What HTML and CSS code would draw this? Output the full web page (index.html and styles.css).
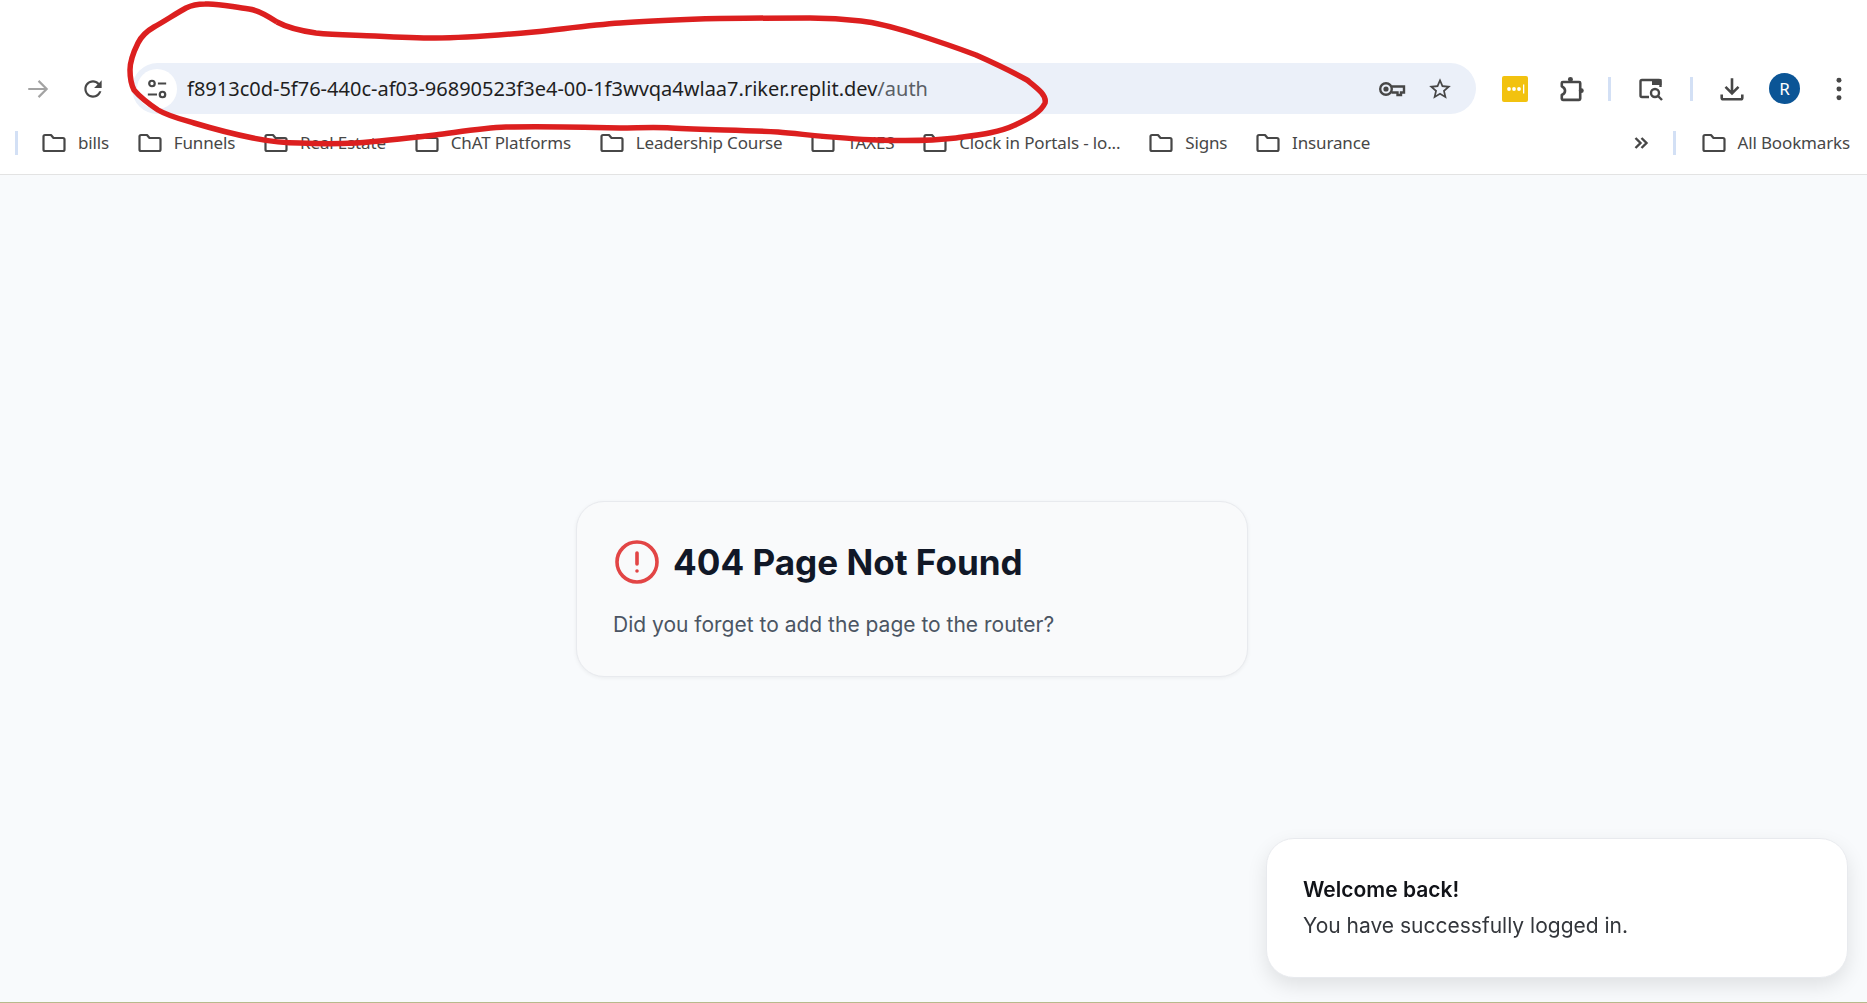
FILE: index.html
```html
<!doctype html>
<html lang="en">
<head>
  <meta charset="utf-8">
  <title>Not Found</title>
  <link rel="stylesheet" href="styles.css">
</head>
<body>
  <svg width="0" height="0" class="defs">
    <symbol id="folder" viewBox="0 0 24 20">
      <path d="M1.500 3.500a1.500 1.500 0 0 1 1.500-1.500h6l2.500 3h9.500a1.500 1.500 0 0 1 1.500 1.500v10a1.500 1.500 0 0 1-1.500 1.500h-18a1.500 1.500 0 0 1-1.500-1.500z" fill="none" stroke="currentColor" stroke-width="2.200" stroke-linejoin="round"/>
    </symbol>
  </svg>

  <header class="toolbar">
    <button class="tool back">
      <svg viewBox="0 0 24 24" class="line-icon"><path d="M3 12h17M12.500 4.500l7.500 7.500-7.500 7.500"/></svg>
    </button>
    <button class="tool reload">
      <svg viewBox="0 0 24 24" class="fill-icon"><path d="M17.650 6.350C16.200 4.900 14.210 4 12 4c-4.420 0-7.990 3.580-7.990 8s3.570 8 7.990 8c3.730 0 6.840-2.550 7.730-6h-2.080c-.82 2.330-3.040 4-5.650 4-3.310 0-6-2.690-6-6s2.690-6 6-6c1.660 0 3.140.69 4.220 1.780L13 11h7V4l-2.350 2.350z"/></svg>
    </button>
    <div class="omnibox">
      <span class="site-info">
        <svg viewBox="0 0 24 24" class="line-icon dark"><circle cx="6.500" cy="6" r="3"/><path d="M13 6h9M2 18h10"/><circle cx="18" cy="18" r="3"/></svg>
      </span>
      <span class="url">f8913c0d-5f76-440c-af03-96890523f3e4-00-1f3wvqa4wlaa7.riker.replit.dev<span class="url-path">/auth</span></span>
      <span class="omni-icon key">
        <svg viewBox="0 0 28 20" class="line-icon dark"><circle cx="8" cy="10" r="5.800"/><circle cx="8" cy="10" r="1.400" fill="#474747"/><path d="M13.500 7.500h12.500v6h-3v2.500h-3.500v-2.500h-6"/></svg>
      </span>
      <span class="omni-icon star">
        <svg viewBox="0 0 24 24" class="fill-icon"><path d="M22 9.240l-7.190-.62L12 2 9.190 8.630 2 9.240l5.460 4.730L5.820 21 12 17.270 18.180 21l-1.630-7.030L22 9.240zM12 15.400l-3.760 2.270 1-4.280-3.320-2.880 4.380-.38L12 6.100l1.710 4.040 4.380.38-3.320 2.880 1 4.280L12 15.400z"/></svg>
      </span>
    </div>
    <span class="tool pass">
      <svg viewBox="0 0 26 26"><rect width="26" height="26" rx="2" fill="#f2c20f"/><circle cx="7" cy="13" r="1.900" fill="#fff"/><circle cx="12" cy="13" r="1.900" fill="#fff"/><circle cx="17" cy="13" r="1.900" fill="#fff"/><rect x="21" y="8.500" width="1.300" height="9" fill="#fff"/></svg>
    </span>
    <button class="tool puzzle">
      <svg viewBox="0 0 24 24" class="line-icon dark"><path d="M4.500 5.500h15a1 1 0 0 1 1 1V21a1 1 0 0 1-1 1h-15a1 1 0 0 1-1-1v-3.500q3-1.500 3-4t-3-4V6.500a1 1 0 0 1 1-1z" stroke-linejoin="round"/><circle cx="11.500" cy="3.200" r="2.300" fill="#474747" stroke="none"/><circle cx="21.500" cy="13.500" r="2.300" fill="#474747" stroke="none"/></svg>
    </button>
    <span class="divider d-one"></span>
    <button class="tool tabs">
      <svg viewBox="0 0 26 26" class="line-icon dark"><path d="M11 21H4a1.500 1.500 0 0 1-1.500-1.500v-14A1.500 1.500 0 0 1 4 4h17a1.500 1.500 0 0 1 1.500 1.500V11"/><rect x="14" y="3" width="9.500" height="6" fill="#474747" stroke="none"/><circle cx="17" cy="17" r="4"/><path d="M20 20l4 4"/></svg>
    </button>
    <span class="divider d-two"></span>
    <button class="tool download">
      <svg viewBox="0 0 24 24" class="line-icon dark"><path d="M12 2v14M6 10l6 6 6-6M2.500 17v3a1.500 1.500 0 0 0 1.500 1.500h16a1.500 1.500 0 0 0 1.500-1.500v-3"/></svg>
    </button>
    <span class="avatar">R</span>
    <button class="tool menu">
      <svg viewBox="0 0 24 24" class="fill-icon"><circle cx="12" cy="4" r="2.300"/><circle cx="12" cy="12" r="2.300"/><circle cx="12" cy="20" r="2.300"/></svg>
    </button>
  </header>

  <nav class="bookmarks">
    <span class="divider"></span>
    <a class="bookmark first"><svg class="folder"><use href="#folder"/></svg>bills</a>
    <a class="bookmark"><svg class="folder"><use href="#folder"/></svg>Funnels</a>
    <a class="bookmark"><svg class="folder"><use href="#folder"/></svg>Real Estate</a>
    <a class="bookmark"><svg class="folder"><use href="#folder"/></svg>ChAT Platforms</a>
    <a class="bookmark"><svg class="folder"><use href="#folder"/></svg>Leadership Course</a>
    <a class="bookmark"><svg class="folder"><use href="#folder"/></svg>TAXES</a>
    <a class="bookmark"><svg class="folder"><use href="#folder"/></svg>Clock in Portals - lo...</a>
    <a class="bookmark"><svg class="folder"><use href="#folder"/></svg>Signs</a>
    <a class="bookmark"><svg class="folder"><use href="#folder"/></svg>Insurance</a>
    <svg viewBox="0 0 16 16" class="line-icon dark chevrons"><path d="M2.500 3l5 5-5 5M8.500 3l5 5-5 5"/></svg>
    <span class="divider d-all"></span>
    <a class="bookmark all"><svg class="folder"><use href="#folder"/></svg>All Bookmarks</a>
  </nav>

  <main class="page">
    <section class="card">
      <div class="card-title">
        <svg viewBox="0 0 24 24" class="alert"><circle cx="12" cy="12" r="10"/><path d="M12 7.500v5.500M12 16.500v.01"/></svg>
        <h1>404 Page Not Found</h1>
      </div>
      <p>Did you forget to add the page to the router?</p>
    </section>
  </main>

  <aside class="toast">
    <div class="toast-title">Welcome back!</div>
    <div class="toast-text">You have successfully logged in.</div>
  </aside>

  <!-- red marker drawn over the screenshot -->
  <svg class="scribble" viewBox="0 0 1867 1003">
    <path d="M277 22 C268 16 258 10 249 9 C232 7 218 3 205 4 C196 4 192 5 186 8 C175 14 165 21 154 27 C147 31 141 37 138 43 C133 53 130 61 130 70 C130 78 131 84 134 90 C140 97 149 104 158 110 C168 116 180 119 194 123 C214 129 233 134 253 138 C268 141 284 143 300 143 C319 144 337 144 356 143 C383 141 409 138 435 135 C459 132 482 128 506 127 C544 126 582 127 620 128 C637 128 654 127 671 128 C707 130 742 130 778 132 C811 135 844 139 877 140 C904 141 930 141 956 138 C978 135 998 133 1015 125 C1030 118 1041 112 1045 103 C1047 95 1037 88 1027 80 C1011 71 994 63 976 55 C955 47 934 40 912 33 C896 28 879 23 861 21 C844 19 827 18 810 18 C773 18 736 18 699 19 C672 20 646 21 620 23 C591 25 563 29 534 32 C501 35 468 38 435 38 C415 38 395 37 375 36 C355 35 335 35 316 33 C302 31 288 28 277 22"/>
  </svg>
</body>
</html>
```

FILE: styles.css
```css
html{
  height: 100%;
}

body{
  margin: 0;
  height: 100vh;
  display: flex;
  flex-direction: column;
  overflow: hidden;
  background: #f8fafc;
  font-family: Inter, "Liberation Sans", sans-serif;
  border-bottom: 1px solid #b7ba8c;
  box-sizing: border-box;
}

.defs{
  position: absolute;
}

.toolbar{
  display: flex;
  align-items: center;
  height: 51px;
  padding: 63px 0 0 25px;
  background: #fff;
  flex-shrink: 0;
}

.tool{
  display: flex;
  align-items: center;
  justify-content: center;
  width: 26px;
  height: 26px;
  padding: 0;
  border: none;
  background: none;
  flex-shrink: 0;
}

.tool svg{
  width: 100%;
  height: 100%;
}

.line-icon{
  fill: none;
  stroke: #a3a3a3;
  stroke-width: 2;
}

.line-icon.dark{
  stroke: #474747;
  stroke-width: 2.400;
}

.fill-icon{
  fill: #474747;
}

.reload{
  margin-left: 29px;
}

.omnibox{
  display: flex;
  align-items: center;
  width: 1344px;
  height: 51px;
  margin-left: 26px;
  border-radius: 26px;
  background: #ebf0f9;
  flex-shrink: 0;
}

.site-info{
  display: flex;
  align-items: center;
  justify-content: center;
  width: 40px;
  height: 40px;
  margin-left: 5px;
  border-radius: 50%;
  background: #fff;
  flex-shrink: 0;
}

.site-info svg{
  width: 22px;
  height: 22px;
}

.url{
  margin-left: 10px;
  flex-grow: 1;
  font-family: "Noto Sans", sans-serif;
  font-size: 20px;
  color: #1f1f1f;
  white-space: nowrap;
}

.url-path{
  color: #5a5f66;
}

.omni-icon{
  display: flex;
  flex-shrink: 0;
}

.key svg{
  width: 28px;
  height: 20px;
}

.star{
  margin: 0 23px 0 21px;
}

.star svg{
  width: 26px;
  height: 26px;
}

.pass{
  margin-left: 26px;
}

.puzzle{
  margin-left: 30px;
}

.divider{
  width: 3px;
  height: 24px;
  background: #d3e0f5;
  flex-shrink: 0;
}

.d-one{
  margin-left: 24px;
}

.tabs{
  margin-left: 27px;
}

.d-two{
  margin-left: 26px;
}

.download{
  margin-left: 26px;
}

.avatar{
  display: flex;
  align-items: center;
  justify-content: center;
  width: 31px;
  height: 31px;
  margin-left: 24px;
  border-radius: 50%;
  background: #0b5596;
  color: #fff;
  font-family: "Noto Sans", sans-serif;
  font-size: 17px;
  flex-shrink: 0;
}

.menu{
  margin-left: 26px;
}

.bookmarks{
  display: flex;
  align-items: center;
  height: 61px;
  padding: 0 17px 3px 15px;
  background: #fff;
  border-bottom: 1px solid #e3e3e3;
  box-sizing: border-box;
  flex-shrink: 0;
  font-family: "Noto Sans", sans-serif;
  font-size: 17px;
  letter-spacing: -0.15px;
  line-height: 22px;
  color: #474747;
}

.bookmark{
  display: flex;
  align-items: center;
  gap: 12px;
  margin-left: 28.8px;
  white-space: nowrap;
}

.bookmark.first{
  margin-left: 24px;
}

.folder{
  width: 24px;
  height: 20px;
  flex-shrink: 0;
}

.chevrons{
  width: 16px;
  height: 16px;
  margin-left: auto;
}

.d-all{
  margin-left: 24px;
}

.bookmark.all{
  margin-left: 26px;
}

.page{
  flex-grow: 1;
  display: flex;
  align-items: center;
  justify-content: center;
  padding-right: 43px;
}

.card{
  width: 672px;
  height: 176px;
  box-sizing: border-box;
  padding: 36px 36px 0;
  background: #f9fafb;
  border: 1px solid #e8eaee;
  border-radius: 28px;
  box-shadow: 0 1px 4px rgba(0, 0, 0, 0.06);
}

.card-title{
  display: flex;
  align-items: center;
  gap: 12px;
}

.alert{
  width: 48px;
  height: 48px;
  fill: none;
  stroke: #e24545;
  stroke-width: 1.800;
  stroke-linecap: round;
  flex-shrink: 0;
}

h1{
  margin: 0;
  font-size: 35.1px;
  font-weight: 700;
  color: #111827;
}

.card p{
  margin: 26px 0 0;
  font-size: 21px;
  color: #4b5563;
}

.toast{
  position: fixed;
  right: 19px;
  bottom: 25px;
  width: 582px;
  height: 140px;
  box-sizing: border-box;
  padding: 38px 36px 0;
  background: #fff;
  border: 1px solid #e8eaee;
  border-radius: 28px;
  box-shadow: 0 8px 20px rgba(0, 0, 0, 0.1);
  color: #111318;
}

.toast-title{
  font-size: 21px;
  font-weight: 600;
}

.toast-text{
  margin-top: 11px;
  font-size: 21px;
  color: #33363b;
}

.scribble{
  position: absolute;
  top: 0;
  left: 0;
  width: 1867px;
  height: 1003px;
  fill: none;
  stroke: #dc1f1f;
  stroke-width: 5.5;
  pointer-events: none;
}
```
